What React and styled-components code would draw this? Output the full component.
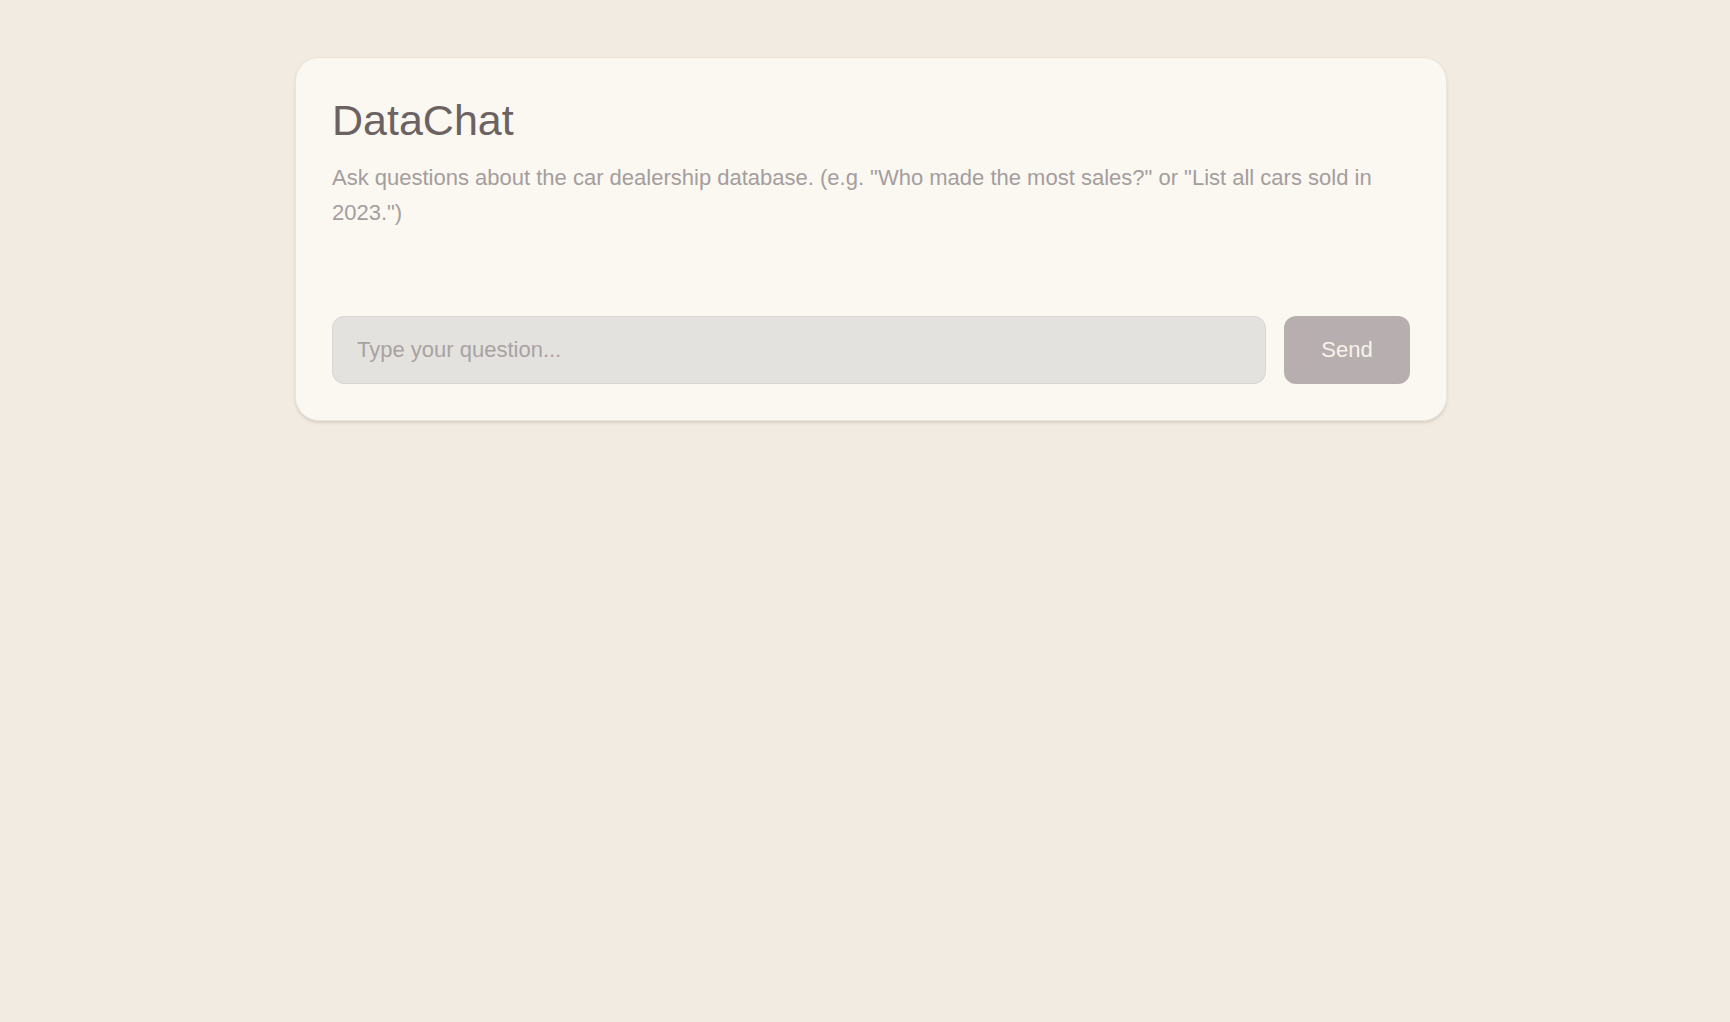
import React, { useState } from "react";
import styled, { createGlobalStyle } from "styled-components";

const GlobalStyle = createGlobalStyle`
  html, body {
    margin: 0;
    padding: 0;
    background: #f2ebe1;
  }
  body {
    font-family: "Liberation Sans", Arial, sans-serif;
  }
`;

const Page = styled.div`
  min-height: 1022px;
  display: flex;
  justify-content: center;
  align-items: flex-start;
  padding: 57px 0 0 12px;
  box-sizing: border-box;
`;

const ChatCard = styled.section`
  width: 1152px;
  box-sizing: border-box;
  padding: 37px 36px 36px;
  background: #faf8f1;
  border: 1px solid #ebe5dc;
  border-radius: 24px;
  box-shadow: 0 2px 3px rgba(120, 110, 100, 0.2);
  display: flex;
  flex-direction: column;
`;

const Title = styled.h1`
  margin: 0;
  font-size: 43px;
  line-height: 50px;
  font-weight: 400;
  color: #6d6262;
`;

const Intro = styled.p`
  margin: 15px 0 0;
  font-size: 22px;
  line-height: 35px;
  color: #a59d9e;
`;

const MessageList = styled.div`
  min-height: 86px;
  display: flex;
  flex-direction: column;
  gap: 12px;
`;

const InputRow = styled.form`
  display: flex;
  gap: 18px;
  align-items: stretch;
`;

const QuestionInput = styled.input`
  flex: 1;
  height: 68px;
  box-sizing: border-box;
  padding: 0 24px;
  border: 1px solid #d8d6d2;
  border-radius: 12px;
  background: #e3e2df;
  font-family: "Liberation Sans", Arial, sans-serif;
  font-size: 22px;
  color: #6e6363;
  outline: none;

  &::placeholder {
    color: #a9a2a2;
  }
`;

const SendButton = styled.button`
  width: 126px;
  height: 68px;
  border: none;
  border-radius: 12px;
  background: #b7afaf;
  color: #f7f3ea;
  font-family: "Liberation Sans", Arial, sans-serif;
  font-size: 22px;
  cursor: pointer;
`;

export default function App() {
  const [question, setQuestion] = useState("");
  const [messages] = useState([]);

  return (
    <>
      <GlobalStyle />
      <Page>
        <ChatCard>
          <Title>DataChat</Title>
          <Intro>
            Ask questions about the car dealership database. (e.g. "Who made
            the most sales?" or "List all cars sold in 2023.")
          </Intro>
          <MessageList>
            {messages.map((m, i) => (
              <div key={i}>{m}</div>
            ))}
          </MessageList>
          <InputRow onSubmit={(e) => e.preventDefault()}>
            <QuestionInput
              placeholder="Type your question..."
              value={question}
              onChange={(e) => setQuestion(e.target.value)}
            />
            <SendButton type="submit">Send</SendButton>
          </InputRow>
        </ChatCard>
      </Page>
    </>
  );
}
